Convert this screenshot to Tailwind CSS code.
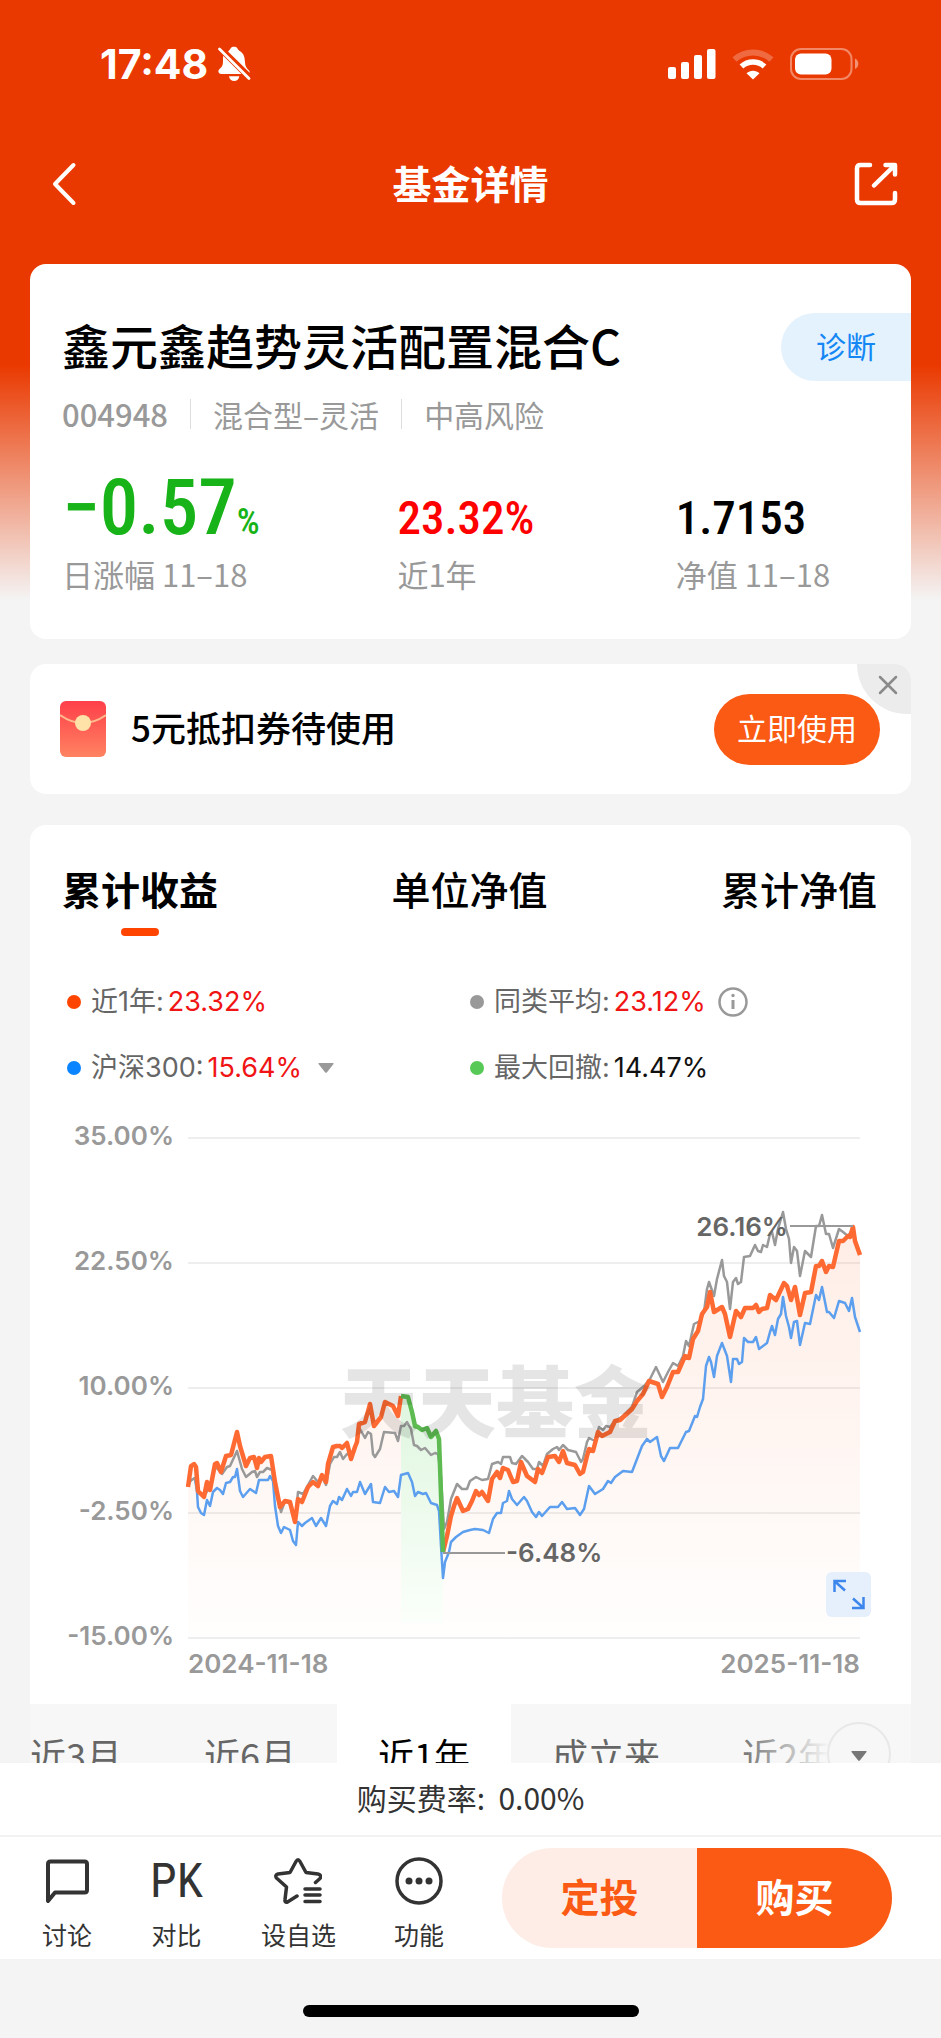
<!DOCTYPE html>
<html lang="zh-CN">
<head>
  <meta charset="UTF-8">
  <meta name="viewport" content="width=device-width, initial-scale=1.0">
  <title>基金详情</title>
  <script src="https://cdn.jsdelivr.net/npm/@tailwindcss/browser@4"></script>
</head>
<body class="min-h-screen bg-[#f4f4f4] bg-[linear-gradient(#ea3900_0px,#ea3900_365px,#f4f4f4_600px)] bg-no-repeat font-['Noto_Sans_CJK_SC','Liberation_Sans',sans-serif] text-black">

  <!-- status bar -->
  <div class="flex h-32 items-center justify-between pl-[100px] pr-[82px] text-white">
    <div class="flex items-center gap-[9px]">
      <span class="font-['Inter',sans-serif] text-[41px] font-bold leading-none">17:48</span>
      <svg class="h-[36px] w-[34px]" viewBox="0 0 34 36" fill="#fff">
        <path d="M11 5.500C12.300 4.300 12.800 4 13.400 2.800 14 1.300 15.300.8 17 .8s3 .5 3.600 2c.5 1.200 1.200 1.600 2.500 2.500 4 2.700 4.600 6 4.900 11.200.2 3.500 1.400 5.700 3.500 7.400.9.800 1.300 1.700 1.200 2.900z"/>
        <path d="M6.200 9.700 24.500 28H4.500C2.600 28 1.400 27 1.400 25.500c0-1.400.7-2.200 1.900-3.200C5.700 20.300 6 18 6 14.500c0-1.700 0-3.300.2-4.800z"/>
        <path d="M12 30.300h10.300c-.3 3-2.500 4.700-5.100 4.700-2.700 0-4.900-1.700-5.200-4.700z"/>
        <path d="M2.500 3 32 32.500" stroke="#fff" stroke-width="2.800" stroke-linecap="round"/>
      </svg>
    </div>
    <div class="flex items-center gap-[16px]">
      <svg class="h-[30px] w-[48px]" viewBox="0 0 48 30" fill="#fff">
        <rect x="0" y="18" width="8" height="12" rx="2"/>
        <rect x="13" y="13" width="8" height="17" rx="2"/>
        <rect x="26" y="6" width="8" height="24" rx="2"/>
        <rect x="39" y="0" width="8.500" height="30" rx="2"/>
      </svg>
      <svg class="h-[31px] w-[42px]" viewBox="0 0 42 31" fill="none" stroke="#fff">
        <path d="M2.500 10.500C13 1 29 1 39.500 10.500" stroke-width="6" opacity=".25"/>
        <path d="M9.500 17.500c6.500-6 16.500-6 23 0" stroke-width="5.500"/>
        <path d="M21 30.500l-6.500-6.300c3.500-3.400 9.500-3.400 13 0z" fill="#fff" stroke="none"/>
      </svg>
      <svg class="h-[32px] w-[69px]" viewBox="0 0 69 32">
        <rect x="1" y="1" width="60.500" height="30" rx="10" fill="none" stroke="#fff" stroke-width="2" opacity=".4"/>
        <rect x="5" y="5.500" width="36.500" height="21" rx="6" fill="#fff"/>
        <path d="M65 10.500c4.500 1.800 4.500 8.700 0 10.500z" fill="#fff" opacity=".45"/>
      </svg>
    </div>
  </div>

  <!-- title bar -->
  <header class="mb-6 flex h-28 items-center justify-between px-[43px] text-white">
    <button type="button" aria-label="返回" class="w-12 pl-[6px]">
      <svg class="h-[44px] w-[30px]" viewBox="0 0 30 44" fill="none" stroke="#fff" stroke-width="4" stroke-linecap="round" stroke-linejoin="round"><path d="M24.500 3 6 22l18.500 19"/></svg>
    </button>
    <h1 class="pb-1 text-[39px] font-bold leading-none">基金详情</h1>
    <button type="button" aria-label="分享" class="flex w-12 justify-end">
      <svg class="h-[44px] w-[44px]" viewBox="0 0 44 44" fill="none" stroke="#fff" stroke-width="4.500" stroke-linecap="round" stroke-linejoin="round">
        <path d="M16 3H6.500Q3 3 3 6.500v31Q3 41 6.500 41h31q3.500 0 3.500-3.500V31M31.500 3H41v9.500M40 4 20 23.500"/>
      </svg>
    </button>
  </header>

  <main class="space-y-[25px] px-[30px]">
    <!-- fund summary -->
    <section class="rounded-2xl bg-white pb-[45px] pl-8 pt-[49px]">
      <div class="flex items-center justify-between">
        <h2 class="pb-[6px] text-[48px] font-medium leading-[62px]">鑫元鑫趋势灵活配置混合C</h2>
        <button type="button" class="h-[68px] w-[130px] rounded-l-full bg-[#e4f2fe] pb-1 text-[30px] text-[#1487f5]">诊断</button>
      </div>
      <div class="mt-[13px] flex h-10 items-center text-[30px] text-[#999]">
        <span class="text-[31px] font-medium">004948</span>
        <span class="ml-[22px] h-[30px] w-px bg-[#ddd]"></span>
        <span class="ml-[22px]">混合型–灵活</span>
        <span class="ml-[22px] h-[30px] w-px bg-[#ddd]"></span>
        <span class="ml-[22px]">中高风险</span>
      </div>
      <dl class="mt-[42px] grid grid-flow-col grid-cols-[335fr_278fr_235fr] grid-rows-[auto_auto] items-baseline gap-y-3">
        <dd class="font-['Roboto_Condensed','Roboto',sans-serif] text-[77px] font-medium leading-[64px] text-[#18b318]">−0.57<span class="text-[36px] leading-none">%</span></dd>
        <dt class="text-[31px] leading-10 text-[#999]">日涨幅 11–18</dt>
        <dd class="font-['Roboto_Condensed','Roboto',sans-serif] text-[47px] font-medium leading-[48px] text-[#f00]">23.32%</dd>
        <dt class="text-[31px] leading-10 text-[#999]">近1年</dt>
        <dd class="font-['Roboto_Condensed','Roboto',sans-serif] text-[47px] font-medium leading-[48px]">1.7153</dd>
        <dt class="text-[31px] leading-10 text-[#999]">净值 11–18</dt>
      </dl>
    </section>

    <!-- coupon -->
    <section class="relative flex h-[130px] items-center overflow-hidden rounded-2xl bg-white pl-[30px] pr-[31px]">
      <button type="button" aria-label="关闭" class="absolute right-0 top-0 flex h-[50px] w-[54px] items-center justify-center rounded-bl-full bg-[#ececec] pb-2 pl-2">
        <svg class="h-[20px] w-[20px]" viewBox="0 0 20 20" stroke="#8a8a8a" stroke-width="2.500" stroke-linecap="round"><path d="M2 2l16 16M18 2 2 18"/></svg>
      </button>
      <svg class="h-[56px] w-[46px]" viewBox="0 0 46 56">
        <defs><linearGradient id="envelope" x1="0" y1="0" x2="0" y2="1"><stop offset="0" stop-color="#ff3f4a"/><stop offset="1" stop-color="#ff8361"/></linearGradient></defs>
        <rect width="46" height="56" rx="6" fill="url(#envelope)"/>
        <path d="M0 14q23 16 46 0" fill="none" stroke="#ffb98c" stroke-width="2"/>
        <circle cx="23" cy="22" r="8" fill="#ffe2a8"/>
      </svg>
      <p class="ml-[25px] flex-1 pb-1 text-[35px] font-medium">5元抵扣券待使用</p>
      <button type="button" class="z-10 h-[71px] w-[166px] rounded-full bg-[#fb5a14] pb-1 text-[30px] text-white">立即使用</button>
    </section>

    <!-- performance -->
    <section class="mt-[31px] rounded-t-2xl bg-white pt-[34px]">
      <nav class="flex justify-between pl-8 pr-[34px] text-[39px] leading-[58px]">
        <a href="#" class="flex flex-col items-center font-bold">累计收益<span class="mt-[11px] h-2 w-[38px] rounded-full bg-[#ff4400]"></span></a>
        <a href="#" class="font-medium">单位净值</a>
        <a href="#" class="font-medium">累计净值</a>
      </nav>

      <div class="mt-[46px] grid grid-cols-[403fr_441fr] gap-y-[26px] pl-[37px] font-['Inter','Noto_Sans_CJK_SC',sans-serif] text-[27px] leading-10 text-[#666]">
        <div class="flex items-center">
          <i class="mr-[10px] size-[14px] rounded-full bg-[#ff4400]"></i>近1年:<span class="ml-1 text-[#f01414]">23.32%</span>
        </div>
        <div class="flex items-center">
          <i class="mr-[10px] size-[14px] rounded-full bg-[#999]"></i>同类平均:<span class="ml-1 text-[#f01414]">23.12%</span>
          <svg class="ml-3 size-[30px]" viewBox="0 0 30 30" fill="none" stroke="#999" stroke-width="2.500"><circle cx="15" cy="15" r="13.500"/><path d="M15 13v9" stroke-width="3"/><circle cx="15" cy="8.500" r="1" fill="#999" stroke-width="1.500"/></svg>
        </div>
        <div class="flex items-center">
          <i class="mr-[10px] size-[14px] rounded-full bg-[#0a84ff]"></i>沪深300:<span class="ml-1 text-[#f01414]">15.64%</span>
          <svg class="ml-4 h-[10px] w-[16px]" viewBox="0 0 16 10" fill="#999"><path d="M1 0h14q1 0 .5 1L9 9.300q-1 1-2 0L.5 1Q0 0 1 0z"/></svg>
        </div>
        <div class="flex items-center">
          <i class="mr-[10px] size-[14px] rounded-full bg-[#57c957]"></i>最大回撤:<span class="ml-1 text-[#111]">14.47%</span>
        </div>
      </div>

      <div class="relative mt-[18px]">
        <svg class="block w-full" viewBox="0 0 881 598" font-family="Inter, sans-serif" font-size="26" font-weight="600">
          <defs>
            <linearGradient id="fundFill" gradientUnits="userSpaceOnUse" x1="0" y1="90" x2="0" y2="490"><stop offset="0" stop-color="#ff6a2b" stop-opacity=".12"/><stop offset="1" stop-color="#ff6a2b" stop-opacity=".01"/></linearGradient>
            <linearGradient id="dropFill" gradientUnits="userSpaceOnUse" x1="0" y1="260" x2="0" y2="485"><stop offset="0" stop-color="#dff6df"/><stop offset="1" stop-color="#fbfffb"/></linearGradient>
          </defs>
          <g fill="#999" text-anchor="end">
            <text x="144" y="39">35.00%</text>
            <text x="144" y="164">22.50%</text>
            <text x="144" y="289">10.00%</text>
            <text x="144" y="414">-2.50%</text>
            <text x="144" y="539">-15.00%</text>
            <text x="830" y="567">2025-11-18</text>
            <text x="158" y="567" text-anchor="start">2024-11-18</text>
          </g>
          <g transform="translate(158 32)" fill="none" stroke-linejoin="round">
            <path d="M0 0h672M0 125h672M0 250h672M0 375h672M0 500h672" stroke="#eee" stroke-width="2"/>
            <polygon id="fundArea" fill="url(#fundFill)"/>
            <polygon id="dropArea" fill="url(#dropFill)"/>
            <polyline id="hs300" stroke="#5c9fee" stroke-width="2.500"/>
            <polyline id="average" stroke="#999" stroke-width="2.500"/>
            <polyline id="fundBefore" stroke="#ff6a33" stroke-width="4.500"/>
            <polyline id="fundAfter" stroke="#ff6a33" stroke-width="4.500"/>
            <polyline id="drop" stroke="#5dbb52" stroke-width="4.500"/>
            <path d="M602 88h63M255 415h62" stroke="#999" stroke-width="2"/>
            <g fill="#666">
              <text x="600" y="98" text-anchor="end">26.16%</text>
              <text x="318" y="424">-6.48%</text>
            </g>
            <text x="308" y="294" text-anchor="middle" font-family="'Noto Sans CJK SC', sans-serif" font-size="78" font-weight="900" fill="#000" fill-opacity=".1">天天基金</text>
          </g>
        </svg>
        <button type="button" aria-label="全屏" class="absolute bottom-[87px] right-[40px] size-[45px] rounded-md bg-[#e6effc]">
          <svg class="size-[45px]" viewBox="0 0 45 45" fill="none" stroke="#3d86ec" stroke-width="2.500"><path d="M8.500 20V9H20M9 9.500l10 9M37.500 25v11H26M37 35.500l-10-9"/></svg>
        </button>
      </div>

      <!-- period tabs -->
      <div class="relative overflow-hidden bg-[#f7f7f7]">
        <div class="-ml-[41px] flex text-[36px] leading-[100px] text-[#666]">
          <button type="button" class="shrink-0 px-[41px]">近3月</button>
          <button type="button" class="shrink-0 px-[41px]">近6月</button>
          <button type="button" class="shrink-0 bg-white px-[41px] text-black">近1年</button>
          <button type="button" class="shrink-0 px-[41px]">成立来</button>
          <button type="button" class="shrink-0 px-[41px]">近2年</button>
        </div>
        <div class="absolute inset-y-0 right-0 flex w-[180px] items-center justify-end bg-linear-to-r from-[#f7f7f7]/0 to-[#f7f7f7] to-55% pr-[20px]">
          <button type="button" aria-label="更多" class="flex size-[64px] items-center justify-center rounded-full border-2 border-[#e8e8e8] bg-[#f7f7f7]">
            <svg class="mt-1 h-[10px] w-[16px]" viewBox="0 0 16 10" fill="#777"><path d="M1 0h14q1 0 .5 1L9 9.300q-1 1-2 0L.5 1Q0 0 1 0z"/></svg>
          </button>
        </div>
      </div>
    </section>
  </main>

  <!-- bottom actions -->
  <footer class="fixed inset-x-0 bottom-0 bg-white text-[#333]">
    <p class="border-b-2 border-[#f2f2f2] pb-[3px] text-center text-[30px] leading-[69px]">购买费率: &nbsp;0.00%</p>
    <div class="flex h-[122px] items-center pr-[49px]">
      <div class="flex flex-1 items-center justify-between pl-[42px] pr-[58px] pt-3 text-[25px] leading-9">
        <button type="button" class="flex flex-col items-center gap-[11px]">
          <svg class="size-[48px]" viewBox="0 0 48 48" fill="none" stroke="#333" stroke-width="4" stroke-linejoin="round"><path d="M5 44V7q0-2.500 2.500-2.500h34Q44 4.500 44 7v26q0 2.500-2.500 2.500H12z"/></svg>
          讨论
        </button>
        <button type="button" class="flex flex-col items-center gap-[11px]">
          <span class="font-['Roboto_Condensed','Roboto',sans-serif] text-[48px] leading-[48px]">PK</span>
          对比
        </button>
        <button type="button" class="flex flex-col items-center gap-[11px]">
          <svg class="size-[48px]" viewBox="0 0 48 48" fill="none" stroke="#333" stroke-width="3.500" stroke-linecap="round" stroke-linejoin="round">
            <path d="M23 39l-9.500 6q-3 1-2.500-2.500L12.500 30 2.500 21q-2-3 1.500-4l12-1.500L22 4.500q2-3.500 4 0l6 11L44 17q4 1 2 4.500l-4.500 4"/>
            <path d="M31 32h15M31 38h15M31 44.500h15"/>
          </svg>
          设自选
        </button>
        <button type="button" class="flex flex-col items-center gap-[11px]">
          <svg class="size-[48px]" viewBox="0 0 48 48" fill="#333"><circle cx="24" cy="24" r="22" fill="none" stroke="#333" stroke-width="3.500"/><circle cx="14" cy="24" r="3.500"/><circle cx="24" cy="24" r="3.500"/><circle cx="34" cy="24" r="3.500"/></svg>
          功能
        </button>
      </div>
      <div class="flex h-[100px] w-[390px] overflow-hidden rounded-full text-[39px] font-bold">
        <button type="button" class="flex-1 bg-[#fdede6] pb-[6px] text-[#fb5a14]">定投</button>
        <button type="button" class="flex-1 bg-[#fb5a14] pb-[6px] text-white">购买</button>
      </div>
    </div>
    <div class="flex h-[79px] justify-center bg-[#f4f4f4] pt-[46px]">
      <span class="h-3 w-[336px] rounded-full bg-black"></span>
    </div>
  </footer>

  <script>
    // x,y inside the 672x500 plot: 35% at the top, -15% at the bottom
    const fundBefore = '0,349 3,328 6,326 8,329 10,353 13,356 16,359 19,344 22,352 27,326 29,325 33,334 38,318 43,317 49,294 52,308 58,328 62,320 66,319 69,330 71,320 73,324 77,319 83,318 87,344 92,369 97,363 102,364 107,384 110,361 114,364 120,349 125,344 130,348 134,337 138,344 140,326 145,309 149,308 152,308 154,310 159,305 163,321 167,309 169,304 171,286 177,284 182,266 186,288 193,279 197,264 205,268 210,278 213,258';
    const drop = '213,258 220,259 224,274 227,288 230,289 234,292 239,290 243,299 248,293 251,301 252,328 255,414';
    const fundAfter = '255,414 259,398 263,378 266,368 269,360 275,373 280,371 284,363 288,353 291,357 294,354 300,363 304,341 309,334 312,340 315,330 320,332 325,344 329,343 333,324 339,338 347,344 350,331 354,335 360,319 367,318 371,324 375,313 379,325 387,327 392,336 395,334 399,318 401,311 405,313 410,294 414,298 422,294 427,283 432,282 444,271 449,263 455,256 461,243 470,246 474,259 479,249 485,234 490,234 497,218 501,220 505,201 510,193 514,176 519,169 522,154 526,174 534,169 537,176 542,199 548,173 553,179 557,170 565,170 568,167 571,174 574,171 579,170 582,157 588,162 596,145 599,148 603,162 607,149 612,177 617,155 623,154 628,128 631,128 634,123 638,134 641,128 645,129 651,103 655,103 660,98 662,99 665,89 667,103 672,117';
    const average = '0,345 2,343 7,340 10,355 16,358 22,349 27,328 34,336 39,329 42,328 49,313 54,331 58,339 64,334 67,333 69,339 72,334 75,334 79,330 84,332 87,351 93,374 97,363 102,366 107,384 110,354 115,356 125,338 130,344 134,339 138,347 142,326 146,319 149,319 152,314 155,321 159,316 163,318 169,304 172,291 177,300 180,294 183,296 185,316 187,319 192,311 196,294 207,295 210,303 213,288 216,288 219,284 223,291 226,307 229,308 233,312 237,310 243,317 247,315 250,316 253,338 256,391 259,384 263,361 269,346 274,351 279,351 282,343 288,339 294,342 300,341 304,326 310,324 313,326 315,319 322,319 324,325 328,326 334,318 340,324 345,331 349,331 351,324 355,328 359,316 365,311 369,309 371,312 375,307 380,312 388,314 393,324 395,321 399,304 401,300 407,303 411,289 415,292 418,288 422,289 427,283 435,278 444,269 449,254 456,248 462,241 468,229 475,244 480,234 485,225 490,228 495,218 498,203 501,208 506,186 512,183 516,174 519,151 521,144 526,158 529,141 534,122 536,138 539,144 542,171 545,144 548,140 550,146 553,144 556,119 562,118 567,107 570,113 573,114 575,107 579,109 582,96 584,94 587,107 590,91 595,74 598,91 601,101 603,125 606,109 609,113 612,138 617,113 623,119 628,88 631,88 634,77 638,96 641,96 645,110 651,91 655,94 660,98 665,91 669,108 672,116';
    const hs300 = '0,348 3,342 7,340 9,354 10,369 13,375 16,377 19,362 22,368 25,354 29,350 32,352 35,356 38,345 42,344 45,339 47,339 49,331 52,353 55,359 62,351 68,355 71,342 80,342 82,338 85,343 87,368 90,388 93,395 96,389 102,392 105,403 108,407 110,384 114,388 117,385 124,380 128,388 133,380 138,388 142,368 145,363 149,366 151,359 154,362 159,351 163,358 165,354 169,354 172,344 177,356 183,346 185,364 192,365 197,349 201,354 206,353 210,359 213,337 220,335 224,344 227,358 230,354 235,356 238,355 243,365 249,367 251,373 253,408 255,440 257,424 261,414 263,404 268,399 275,394 282,392 287,391 295,392 301,395 305,381 309,375 313,375 315,365 319,363 321,353 324,361 329,367 336,359 339,363 344,374 348,379 351,374 354,378 362,369 370,369 374,364 379,371 387,370 392,377 396,371 401,348 407,356 415,351 420,343 423,345 427,339 435,333 444,334 454,308 459,301 462,304 469,299 473,318 476,323 482,310 490,310 498,294 501,293 507,278 509,279 512,269 515,261 518,228 521,219 523,224 526,239 529,218 534,205 539,218 543,244 545,221 549,221 551,226 554,224 556,200 560,204 565,204 568,199 571,211 579,205 582,194 584,188 587,197 590,181 593,176 595,159 598,178 601,189 603,200 606,184 609,183 612,207 617,185 622,186 628,157 631,162 634,149 639,174 641,174 646,180 651,163 657,165 661,173 664,160 667,179 672,194';

    function setPoints(id, points) {
      document.getElementById(id).setAttribute('points', points);
    }

    setPoints('fundBefore', fundBefore);
    setPoints('drop', drop);
    setPoints('fundAfter', fundAfter);
    setPoints('average', average);
    setPoints('hs300', hs300);
    setPoints('fundArea', `0,498 ${fundBefore} ${drop} ${fundAfter} 672,498`);
    setPoints('dropArea', `213,485 ${drop} 255,485`);
  </script>
</body>
</html>
